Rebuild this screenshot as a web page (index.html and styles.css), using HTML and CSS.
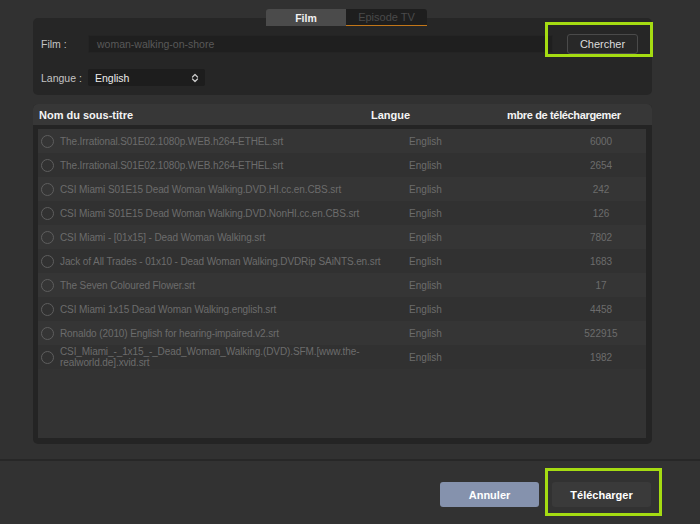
FILE: index.html
```html
<!DOCTYPE html>
<html lang="fr">
<head>
<meta charset="utf-8">
<title>Sous-titres</title>
<link rel="stylesheet" href="styles.css">
</head>
<body>
<div class="app">
  <div class="tabs">
    <div class="tab active">Film</div>
    <div class="tab">Episode TV</div>
  </div>
  <div class="search-panel">
    <div class="form-row film-row">
      <span class="label">Film :</span>
      <div class="input">woman-walking-on-shore</div>
      <button class="btn-search">Chercher</button>
    </div>
    <div class="form-row lang-row">
      <span class="label">Langue :</span>
      <div class="select">
        <span>English</span>
        <svg class="updown" width="8" height="10" viewBox="0 0 8 10"><path d="M1.5 4 L4 1.5 L6.5 4 M1.5 6 L4 8.5 L6.5 6" fill="none" stroke="#c8c8c8" stroke-width="1.3" stroke-linecap="round" stroke-linejoin="round"/></svg>
      </div>
    </div>
    <span class="highlight hl-search"></span>
  </div>

  <div class="table">
    <div class="thead">
      <div class="th th-name">Nom du sous-titre</div>
      <div class="th th-lang">Langue</div>
      <div class="th th-count">mbre de téléchargemer</div>
    </div>
    <div class="tbody">
      <div class="tr"><div class="td name"><span class="radio"></span><span>The.Irrational.S01E02.1080p.WEB.h264-ETHEL.srt</span></div><div class="td lang">English</div><div class="td count">6000</div></div>
      <div class="tr"><div class="td name"><span class="radio"></span><span>The.Irrational.S01E02.1080p.WEB.h264-ETHEL.srt</span></div><div class="td lang">English</div><div class="td count">2654</div></div>
      <div class="tr"><div class="td name"><span class="radio"></span><span>CSI Miami S01E15 Dead Woman Walking.DVD.HI.cc.en.CBS.srt</span></div><div class="td lang">English</div><div class="td count">242</div></div>
      <div class="tr"><div class="td name"><span class="radio"></span><span>CSI Miami S01E15 Dead Woman Walking.DVD.NonHI.cc.en.CBS.srt</span></div><div class="td lang">English</div><div class="td count">126</div></div>
      <div class="tr"><div class="td name"><span class="radio"></span><span>CSI Miami - [01x15] - Dead Woman Walking.srt</span></div><div class="td lang">English</div><div class="td count">7802</div></div>
      <div class="tr"><div class="td name"><span class="radio"></span><span>Jack of All Trades - 01x10 - Dead Woman Walking.DVDRip SAiNTS.en.srt</span></div><div class="td lang">English</div><div class="td count">1683</div></div>
      <div class="tr"><div class="td name"><span class="radio"></span><span>The Seven Coloured Flower.srt</span></div><div class="td lang">English</div><div class="td count">17</div></div>
      <div class="tr"><div class="td name"><span class="radio"></span><span>CSI Miami 1x15 Dead Woman Walking.english.srt</span></div><div class="td lang">English</div><div class="td count">4458</div></div>
      <div class="tr"><div class="td name"><span class="radio"></span><span>Ronaldo (2010) English for hearing-impaired.v2.srt</span></div><div class="td lang">English</div><div class="td count">522915</div></div>
      <div class="tr"><div class="td name"><span class="radio"></span><span>CSI_Miami_-_1x15_-_Dead_Woman_Walking.(DVD).SFM.[www.the-<br>realworld.de].xvid.srt</span></div><div class="td lang">English</div><div class="td count">1982</div></div>
    </div>
  </div>

  <div class="footer">
    <button class="btn btn-cancel">Annuler</button>
    <button class="btn btn-download">Télécharger</button>
    <span class="highlight hl-download"></span>
  </div>
</div>
</body>
</html>
```

FILE: styles.css
```css
* { box-sizing: border-box; }
html, body { margin: 0; padding: 0; }
body {
  background: #313131;
  font-family: "Liberation Sans", Arial, sans-serif;
  font-size: 11px;
  color: #d0d0d0;
}
.app {
  width: 700px;
  height: 524px;
  padding-top: 9px;
  display: flex;
  flex-direction: column;
  overflow: hidden;
}
.tabs {
  position: relative;
  z-index: 1;
  display: flex;
  margin-left: 266px;
  height: 17px;
}
.tab {
  width: 80px;
  height: 17px;
  display: flex;
  align-items: center;
  justify-content: center;
  font-size: 10.5px;
  font-weight: bold;
  color: #4a4a4a;
  background: #1e1e1e;
  border-radius: 3px 3px 0 0;
  border-bottom: 1px solid #c27618;
}
.tab + .tab { width: 81px; font-weight: normal; font-size: 11px; border-radius: 0 3px 0 0; }
.tab.active {
  background: #4b4b4b;
  color: #f2f2f2;
  border-bottom: none;
  border-radius: 3px 0 0 0;
}
.search-panel {
  position: relative;
  margin: -8px 48px 0 33px;
  height: 77px;
  background: #262626;
  border-radius: 5px;
  padding: 16px 0 0 8px;
}
.form-row {
  display: flex;
  align-items: center;
}
.film-row { height: 20px; }
.lang-row { height: 17px; margin-top: 15px; }
.label {
  width: 47px;
  color: #c4c4c4;
  font-size: 10.5px;
}
.input {
  width: 465px;
  height: 18px;
  background: #1f1f1f;
  border: 1px solid #242424;
  border-radius: 2px;
  color: #595959;
  padding-left: 8px;
  display: flex;
  align-items: center;
  font-size: 10.5px;
}
.btn-search {
  margin-left: 14px;
  width: 71px;
  height: 20px;
  background: #282828;
  border: 1px solid #4a4a4a;
  border-radius: 3px;
  color: #dcdcdc;
  font-family: inherit;
  font-size: 11px;
  padding: 0;
}
.select {
  width: 117px;
  height: 17px;
  background: #1d1d1d;
  border-radius: 2px;
  display: flex;
  align-items: center;
  justify-content: space-between;
  padding: 0 6px 0 7px;
  color: #ececec;
  font-size: 10.5px;
}
.highlight {
  position: absolute;
  border: 3px solid #a5dc12;
  pointer-events: none;
}
.hl-search { left: 512px; top: 4px; width: 108px; height: 35px; }

.table {
  margin: 9px 48px 0 33px;
  height: 340px;
  background: #242424;
  border-radius: 5px;
  display: flex;
  flex-direction: column;
}
.thead {
  height: 21px;
  background: #373737;
  border-radius: 5px 5px 0 0;
  display: flex;
  align-items: center;
  font-weight: bold;
  color: #f4f4f4;
  font-size: 11px;
}
.th-name { width: 338px; padding-left: 6px; }
.th-lang { width: 136px; }
.th-count {
  white-space: nowrap;
  letter-spacing: -0.35px;
}
.tbody {
  flex: 1;
  margin: 4px 6px 6px 5px;
  background: #333333;
}
.tr {
  display: grid;
  grid-template-columns: 350px 72px 96px 90px;
  min-height: 24px;
  align-items: center;
  color: #6c6c6c;
  font-size: 10px;
  letter-spacing: -0.1px;
}
.tr:nth-child(odd) { background: #353535; }
.tr:nth-child(even) { background: #313131; }
.td.name {
  display: flex;
  align-items: center;
  padding-left: 3px;
  line-height: 11px;
  white-space: nowrap;
}
.radio {
  flex: none;
  width: 13px;
  height: 13px;
  border: 1.5px solid #5e5e5e;
  border-radius: 50%;
  margin-right: 6px;
}
.td.lang { text-align: center; letter-spacing: 0; padding-left: 3px; }
.td.count { grid-column: 4; text-align: center; letter-spacing: 0; }

.footer {
  position: relative;
  margin-top: 15px;
  border-top: 2px solid #272727;
  flex: 1;
  display: flex;
  justify-content: flex-end;
  gap: 13px;
  padding: 21px 49px 0 0;
  background: #323232;
}
.btn {
  width: 99px;
  height: 25px;
  border: none;
  border-radius: 3px;
  color: #ffffff;
  font-family: inherit;
  font-weight: bold;
  font-size: 11px;
  padding: 0;
}
.btn-cancel { background: #8592ad; }
.btn-download { background: #3a3a3a; }
.hl-download { left: 545px; top: 7px; width: 117px; height: 48px; }
```
